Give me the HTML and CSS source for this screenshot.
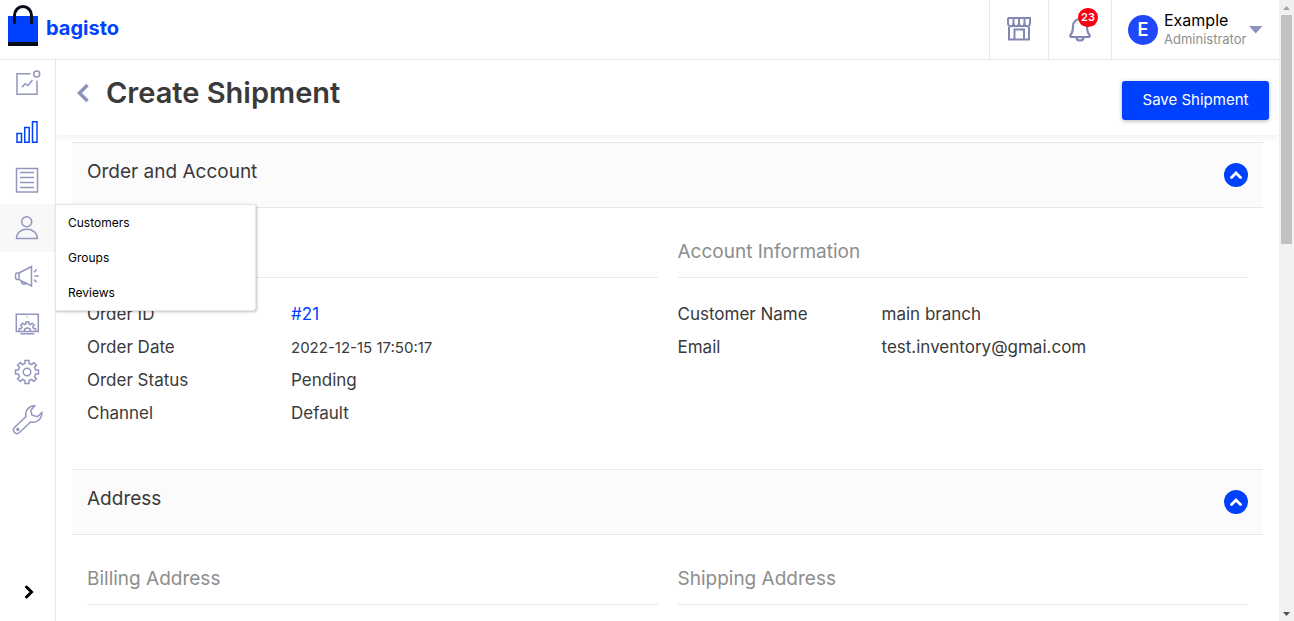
FILE: index.html
```html
<!DOCTYPE html>
<html lang="en">
<head>
<meta charset="utf-8">
<meta name="viewport" content="width=device-width, initial-scale=1">
<title>Create Shipment</title>
<link rel="stylesheet" href="styles.css">
</head>
<body>
<div class="app">
  <header class="topbar">
    <a class="brand" href="#">
      <svg class="brand-mark" width="30" height="42" viewBox="0 0 30 42" aria-hidden="true">
        <path fill="#0041ff" d="M0 12h30v26H0z"/>
        <path fill="#060c18" d="M0 38h30v4H0z"/>
        <path d="M6.500 18.500V11.500a8.500 9 0 0 1 17 0V18.500" fill="none" stroke="#060c18" stroke-width="3" stroke-linecap="round"/>
      </svg>
      <span class="brand-name">bagisto</span>
    </a>
    <a class="top-action" href="#" aria-label="Visit shop">
      <svg width="26" height="26" viewBox="0 0 26 26" fill="none" stroke="#8288b3" stroke-width="2">
        <path d="M2 2h22v6M2 2v6M3 11v12.500h20V11"/>
        <path d="M2 6.500c0 5 5.500 5 5.500 0 0 5 5.500 5 5.500 0 0 5 5.500 5 5.500 0 0 5 5.500 5 5.500 0M7.500 2v5M13 2v5M18.500 2v5"/>
        <path d="M8.500 23v-9.500h9.500V23"/>
      </svg>
    </a>
    <button class="top-action bell" type="button" aria-label="Notifications">
      <svg width="24" height="26" viewBox="0 0 24 26" fill="none" stroke="#8288b3" stroke-width="2.200" stroke-linejoin="round">
        <path d="M12 3C7.500 3 5 6.500 5 10c0 5.500-.8 7-2.500 9-.6.8-.3 2 1 2h17c1.300 0 1.600-1.200 1-2C19.800 17 19 15.500 19 10c0-3.500-2.500-7-7-7z"/>
        <path d="M8.500 21.500c.5 4 6.500 4 7 0"/>
      </svg>
      <span class="badge">23</span>
    </button>
    <button class="profile" type="button">
      <span class="avatar">E</span>
      <span class="who"><span class="name">Example</span><span class="role">Administrator</span></span>
      <svg width="14" height="8" viewBox="0 0 14 8" aria-hidden="true"><path d="M0 0h13.500L6.700 7.500z" fill="#8d92bb"/></svg>
    </button>
  </header>

  <nav class="sidebar" aria-label="Main">
    <a class="nav-item" href="#" aria-label="Dashboard"><svg viewBox="0 0 55 48"><path d="M30.500 13.700H17V34.200H37V20.500M22 27.300l3-3.600 3 1.800 4.500-5.500"/><circle cx="36.700" cy="14" r="3"/></svg></a>
    <a class="nav-item current" href="#" aria-label="Sales"><svg viewBox="0 0 55 48"><path d="M17 25.500h4.500v8.800H17zM24.700 19.500h4.500v14.800h-4.500zM32.500 13.700H37v20.600h-4.500z"/></svg></a>
    <a class="nav-item" href="#" aria-label="Catalog"><svg viewBox="0 0 55 48"><path d="M16.500 12.500h21v23.500h-21zM20 16.500h14M20 21.500h14M20 26.500h14M20 31.500h14"/></svg></a>
    <div class="nav-group">
      <a class="nav-item" href="#" aria-label="Customers"><svg viewBox="0 0 55 48"><circle cx="26.700" cy="17.800" r="5"/><path d="M16.500 34.500c0-12.200 20.800-12.200 20.800 0z"/></svg></a>
      <div class="flyout">
        <a href="#">Customers</a>
        <a href="#">Groups</a>
        <a href="#">Reviews</a>
      </div>
    </div>
    <a class="nav-item" href="#" aria-label="Marketing"><svg viewBox="0 0 55 48"><path d="M19 21h-2c-2 0-2 6.600 0 6.600h2zM19 21l12.500-6.500V34L19 27.600M21.300 29c0 4 5 3.500 5 2M34 20.300l2.700-2.800M34.500 24h4.200M34 27.600l2.700 2.700"/></svg></a>
    <a class="nav-item" href="#" aria-label="Content"><svg viewBox="0 0 55 48"><path d="M16.300 14.300h22v17.200h-22zM20.300 33.800h14M26.800 16.800h1"/><path d="M19.300 31v-2.500h2l.8-1.700-1.400-1.500 2-2 1.500 1.300 1.700-.7v-2h3v2l1.700.7 1.500-1.300 2 2-1.400 1.500.8 1.700h2V31"/><path d="M24.300 31c0-4 6.200-4 6.200 0"/></svg></a>
    <a class="nav-item" href="#" aria-label="Settings"><svg viewBox="0 0 55 48"><g transform="translate(27 24)"><path d="M-2-8.600V-11.500H2V-8.600L4.700-7.500 6.700-9.500 9.500-6.700 7.500-4.700 8.600-2H11.500V2H8.600L7.500 4.700 9.500 6.700 6.700 9.500 4.700 7.500 2 8.600V11.500H-2V8.600L-4.700 7.500-6.700 9.500-9.500 6.700-7.500 4.700-8.600 2H-11.500V-2H-8.600L-7.500-4.700-9.500-6.700-6.700-9.500-4.700-7.500Z"/><circle r="3.700"/></g></svg></a>
    <a class="nav-item" href="#" aria-label="Configure"><svg viewBox="0 0 55 48"><path d="M34.700 9.800c-6 .2-10.200 5.200-8.700 10.700L14.500 31.500c-3 3.500 1.500 8 5 5L30.500 26c6 1.500 11.500-3 11.300-9.500l-4.300 4.200-5.500-1.500-1.300-4.700z"/><circle cx="17.800" cy="33.500" r="1"/></svg></a>
    <button class="expand" type="button" aria-label="Expand menu"><svg width="10" height="14" viewBox="0 0 10 14"><path d="M2.500 2l5 5-5 5" fill="none" stroke="#000" stroke-width="3" stroke-linecap="round"/></svg></button>
  </nav>

  <main class="page">
    <div class="page-head">
      <a class="back" href="#" aria-label="Back"><svg width="14" height="20" viewBox="0 0 14 20"><path d="M11.500 2L3.500 10l8 8" fill="none" stroke="#8d92bb" stroke-width="3.500"/></svg></a>
      <h1>Create Shipment</h1>
      <button class="save" type="button">Save Shipment</button>
    </div>
    <div class="content">
      <section>
        <div class="section-head">
          <h2>Order and Account</h2>
          <button class="toggle" type="button" aria-label="Collapse Order and Account"><svg width="12" height="8" viewBox="0 0 12 8"><path d="M1.500 6.500L6 2l4.500 4.500" fill="none" stroke="#fff" stroke-width="2.800" stroke-linecap="round"/></svg></button>
        </div>
        <div class="section-body">
          <div class="panel">
            <h3></h3>
            <dl>
              <dt>Order ID</dt><dd><a href="#">#21</a></dd>
              <dt>Order Date</dt><dd class="date">2022-12-15 17:50:17</dd>
              <dt>Order Status</dt><dd>Pending</dd>
              <dt>Channel</dt><dd>Default</dd>
            </dl>
          </div>
          <div class="panel">
            <h3>Account Information</h3>
            <dl>
              <dt>Customer Name</dt><dd>main branch</dd>
              <dt>Email</dt><dd>test.inventory@gmai.com</dd>
            </dl>
          </div>
        </div>
      </section>
      <section>
        <div class="section-head">
          <h2>Address</h2>
          <button class="toggle" type="button" aria-label="Collapse Address"><svg width="12" height="8" viewBox="0 0 12 8"><path d="M1.500 6.500L6 2l4.500 4.500" fill="none" stroke="#fff" stroke-width="2.800" stroke-linecap="round"/></svg></button>
        </div>
        <div class="section-body">
          <div class="panel"><h3>Billing Address</h3></div>
          <div class="panel"><h3>Shipping Address</h3></div>
        </div>
      </section>
    </div>
  </main>

  <div class="scrollbar" aria-hidden="true">
    <svg width="15" height="15" viewBox="0 0 15 15"><path d="M4 10h7L7.500 6z" fill="#a3a3a3"/></svg>
    <div class="thumb"></div>
    <svg width="15" height="15" viewBox="0 0 15 15"><path d="M4 6h7l-3.500 4z" fill="#505050"/></svg>
  </div>
</div>
</body>
</html>
```
FILE: styles.css
```css
* { box-sizing: border-box; }
body {
  margin: 0;
  font-family: Inter, "Open Sans", sans-serif;
  font-size: 17px;
  color: #3a3a3a;
  background: #fff;
}
a { color: #0041ff; text-decoration: none; }
button { font: inherit; color: inherit; background: none; border: 0; padding: 0; cursor: pointer; }
svg { display: block; }
h1, h2, h3, dl, dd { margin: 0; }

.app {
  display: grid;
  grid-template: 60px 1fr / 56px 1fr 15px;
  height: 100vh;
  overflow: hidden;
}

.topbar {
  grid-column: 1 / 3;
  display: flex;
  border-bottom: 1px solid #e7e7e7;
}
.brand { display: flex; align-items: center; gap: 8px; padding: 0 0 8px 8px; margin-right: auto; }
.brand-mark { align-self: flex-start; margin-top: 4px; }
.brand-name { font-size: 20px; font-weight: 700; line-height: 24px; padding-top: 4px; }
.top-action {
  display: flex;
  align-items: center;
  justify-content: center;
  width: 59px;
  padding-bottom: 2px;
  border-left: 1px solid #e7e7e7;
}
.bell { position: relative; width: 63px; }
.badge {
  position: absolute;
  top: 8px;
  right: 13px;
  width: 20px;
  height: 19px;
  border-radius: 10px;
  background: #fc0016;
  color: #fff;
  font-size: 11px;
  font-weight: 600;
  line-height: 19px;
}
.profile {
  display: flex;
  align-items: center;
  padding: 0 16px;
  border-left: 1px solid #e7e7e7;
}
.avatar {
  width: 30px;
  height: 30px;
  border-radius: 50%;
  background: #2148f8;
  color: #fff;
  font-size: 18px;
  font-weight: 600;
  line-height: 30px;
}
.who { display: flex; flex-direction: column; width: 91px; padding-left: 6px; text-align: left; white-space: nowrap; }
.name { font-size: 16px; line-height: 19px; color: #000; }
.role { font-size: 13px; line-height: 19px; color: #8e8e8e; }

.sidebar {
  display: flex;
  flex-direction: column;
  border-right: 1px solid #e7e7e7;
  z-index: 2;
}
.nav-item { display: block; height: 48px; }
.nav-item svg { width: 55px; height: 48px; fill: none; stroke: #9296bd; stroke-width: 1.5; }
.nav-item.current svg { stroke: #0041ff; }
.nav-group { position: relative; background: #f8f8f8; }
.flyout {
  position: absolute;
  top: 0;
  left: 55px;
  width: 201px;
  border: 1px solid #e7e7e7;
  border-radius: 0 3px 3px 0;
  background: #fff;
  box-shadow: 1px 1px 3px rgba(0, 0, 0, .25);
}
.flyout a { display: block; padding-left: 12px; font-size: 12px; line-height: 35px; color: #000; }
.expand { margin-top: auto; padding: 0 0 22px 24px; }

.page { min-width: 0; overflow: hidden; }
.page-head {
  display: flex;
  align-items: center;
  height: 75px;
  padding: 0 10px 0 20px;
  box-shadow: 0 3px 6px rgba(0, 0, 0, .05);
}
.back { padding-bottom: 10px; }
h1 { margin: 0 auto 10px 16px; font-size: 29px; font-weight: 600; line-height: 36px; }
.save {
  height: 39px;
  width: 147px;
  margin-top: 5px;
  padding-bottom: 2px;
  border-radius: 3px;
  background: #0041ff;
  color: #fff;
  font-size: 15px;
  box-shadow: 0 1px 4px rgba(0, 0, 0, .3);
}

.content { padding: 7px 16px 0; }
.section-head {
  display: flex;
  align-items: center;
  justify-content: space-between;
  height: 66px;
  padding: 0 15px;
  border: solid #e7e7e7;
  border-width: 1px 0;
  background: #fbfbfb;
}
h2 { font-size: 19px; font-weight: 400; line-height: 24px; padding-bottom: 6px; }
.toggle {
  display: flex;
  align-items: center;
  justify-content: center;
  width: 24px;
  height: 24px;
  border-radius: 50%;
  background: #0041ff;
}
.section-body {
  display: grid;
  grid-template-columns: 1fr 1fr;
  gap: 20px;
  padding: 30px 15px 39px;
}
h3 {
  min-height: 40px;
  padding-bottom: 11px;
  border-bottom: 1px solid #e9e9e9;
  font-size: 19px;
  font-weight: 400;
  line-height: 28px;
  color: #8e8e8e;
}
dl { display: grid; grid-template-columns: 204px 1fr; padding-top: 20px; line-height: 33px; }
.date { font-size: 15px; }

.scrollbar {
  grid-area: 1 / 3 / 3 / 4;
  display: flex;
  flex-direction: column;
  background: #f1f1f1;
}
.thumb { height: 229px; margin: 0 2px auto; background: #c1c1c1; }
```
